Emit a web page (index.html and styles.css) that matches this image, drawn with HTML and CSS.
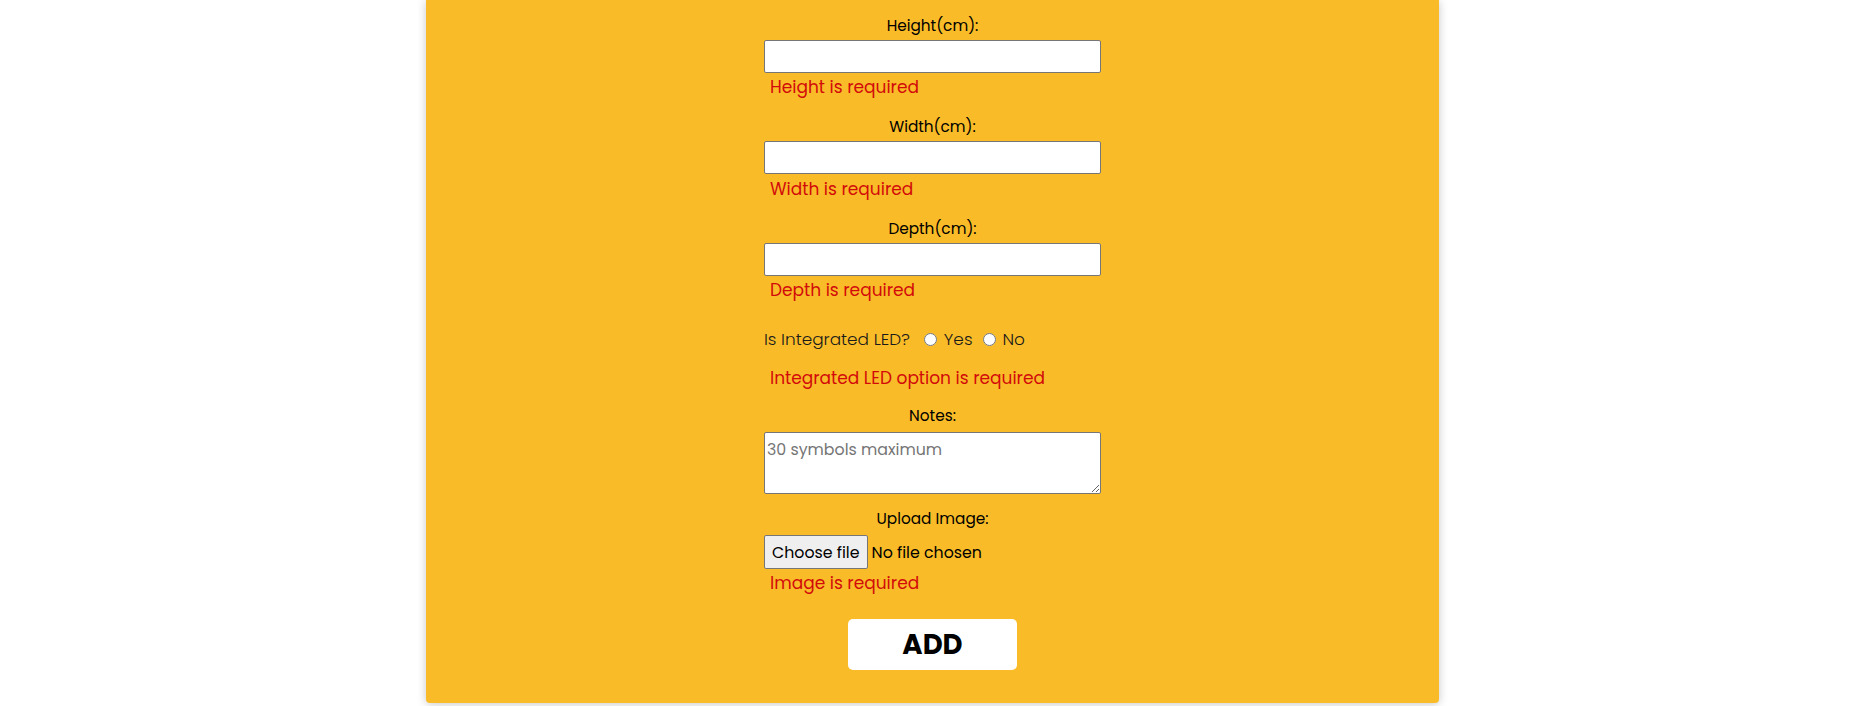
FILE: index.html
```html
<!DOCTYPE html>
<html lang="en">
<head>
<meta charset="utf-8">
<title>Add product</title>
<link rel="stylesheet" href="styles.css">
</head>
<body>
<div class="page">
  <div class="card">
    <form class="form">
      <div class="field">
        <label class="label">Height(cm):</label>
        <input class="input" type="text">
        <div class="error">Height is required</div>
      </div>
      <div class="field">
        <label class="label">Width(cm):</label>
        <input class="input" type="text">
        <div class="error">Width is required</div>
      </div>
      <div class="field field-last">
        <label class="label">Depth(cm):</label>
        <input class="input" type="text">
        <div class="error">Depth is required</div>
      </div>
      <div class="radio-row">
        <span class="radio-q">Is Integrated LED?</span>
        <label class="radio-opt"><input class="radio" type="radio" name="led"><span>Yes</span></label>
        <label class="radio-opt"><input class="radio" type="radio" name="led"><span>No</span></label>
      </div>
      <div class="error error-led">Integrated LED option is required</div>
      <div class="field notes">
        <label class="label">Notes:</label>
        <textarea class="textarea" placeholder="30 symbols maximum"></textarea>
      </div>
      <div class="field upload">
        <label class="label">Upload Image:</label>
        <div class="file-row">
          <button class="file-btn" type="button">Choose file</button>
          <span class="file-name">No file chosen</span>
        </div>
        <div class="error error-img">Image is required</div>
      </div>
      <div class="actions">
        <button class="add" type="button">ADD</button>
      </div>
    </form>
  </div>
</div>
</body>
</html>
```
FILE: styles.css
```css
html, body {
  margin: 0;
  padding: 0;
  background: #ffffff;
}
body {
  font-family: Poppins, Inter, "Open Sans", sans-serif;
  color: #000;
  overflow: hidden;
}
.page {
  display: flex;
  justify-content: center;
  padding-left: 9px;
  padding-bottom: 3px;
}
.card {
  width: 1013px;
  height: 703px;
  box-sizing: border-box;
  background: #f9bc28;
  border-radius: 0 0 4px 4px;
  box-shadow: 0 1px 10px rgba(0, 0, 0, 0.22);
  padding-top: 15.5px;
}
.form {
  width: 337px;
  margin: 0 auto;
  display: flex;
  flex-direction: column;
}
.field {
  display: flex;
  flex-direction: column;
  margin-bottom: 19px;
}
.field-last {
  margin-bottom: 0;
}
.label {
  display: block;
  text-align: center;
  font-size: 15.3px;
  font-weight: 400;
  line-height: 20px;
  margin-bottom: 4px;
}
.input {
  display: block;
  width: 337px;
  height: 33px;
  box-sizing: border-box;
  border: 1px solid #767676;
  border-radius: 2px;
  background: #fff;
  margin: 0;
  padding: 1px 2px;
  font-family: inherit;
  font-size: 16px;
}
.error {
  color: #d20a0a;
  font-size: 17px;
  line-height: 22px;
  padding-left: 6px;
  margin-top: 3.5px;
}
.radio-row {
  display: flex;
  align-items: center;
  height: 24px;
  margin-top: 26px;
  font-size: 16.9px;
  font-weight: 300;
  line-height: 24px;
  color: #1a1a1a;
}
.radio-q {
  margin-right: 14px;
}
.radio-opt {
  display: flex;
  align-items: center;
  margin-right: 10px;
}
.radio {
  width: 13px;
  height: 13px;
  margin: 0 7px 0 0;
}
.error-led {
  margin-top: 15.5px;
}
.notes {
  margin-top: 17.5px;
  margin-bottom: 0;
}
.notes .label {
  margin-bottom: 5.5px;
}
.textarea {
  display: block;
  width: 337px;
  height: 62px;
  box-sizing: border-box;
  border: 1px solid #767676;
  border-radius: 2px;
  margin: 0;
  padding: 4px 2px 2px 2px;
  font-family: inherit;
  font-size: 15.8px;
  font-weight: 400;
  resize: both;
}
.textarea::placeholder {
  color: #757575;
}
.upload {
  margin-top: 15.5px;
  margin-bottom: 0;
}
.upload .label {
  margin-bottom: 6px;
}
.file-row {
  display: flex;
  align-items: center;
  height: 34px;
}
.file-btn {
  height: 34px;
  box-sizing: border-box;
  padding: 0 7px;
  margin: 0 4px 0 0;
  border: 1px solid #767676;
  border-radius: 2px;
  background: #efefef;
  font-family: inherit;
  font-size: 15.8px;
  color: #000;
}
.file-name {
  font-size: 15.8px;
  color: #000;
}
.error-img {
  margin-top: 2.5px;
}
.actions {
  display: flex;
  justify-content: center;
  margin-top: 25.5px;
}
.add {
  width: 169px;
  height: 51px;
  border: none;
  border-radius: 5px;
  background: #fff;
  font-family: inherit;
  font-size: 27.5px;
  font-weight: 700;
  line-height: 51px;
  color: #000;
  padding: 0;
}
```
